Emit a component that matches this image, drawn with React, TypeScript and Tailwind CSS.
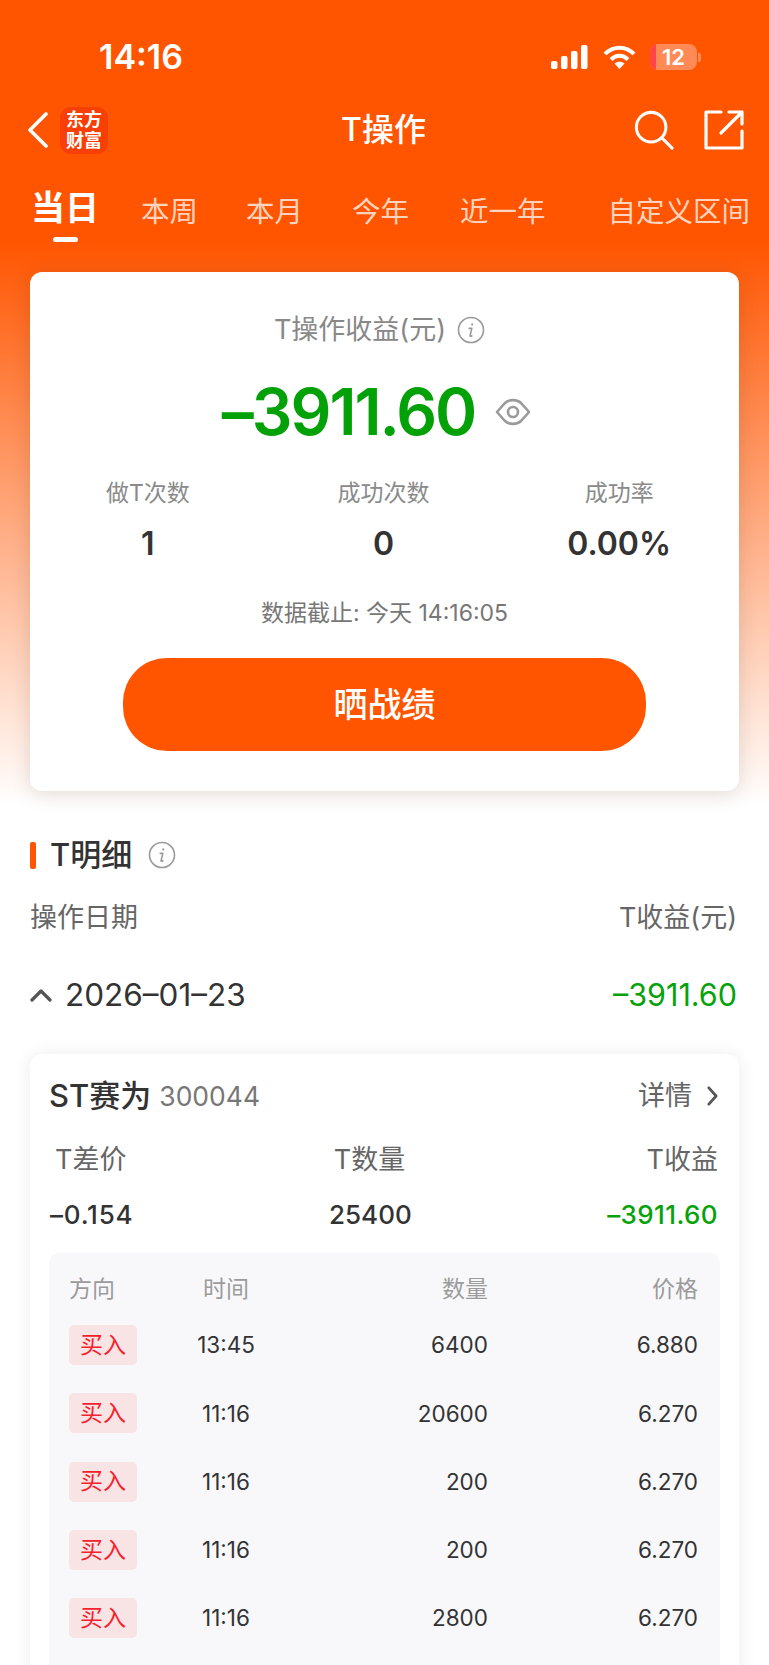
import React from "react";

type Trade = { time: string; qty: string; price: string };

const trades: Trade[] = [
  { time: "13:45", qty: "6400", price: "6.880" },
  { time: "11:16", qty: "20600", price: "6.270" },
  { time: "11:16", qty: "200", price: "6.270" },
  { time: "11:16", qty: "200", price: "6.270" },
  { time: "11:16", qty: "2800", price: "6.270" },
];

function InfoIcon({ className }: { className?: string }) {
  return (
    <svg viewBox="0 0 28 28" className={className} fill="none" stroke="#9a9a9a">
      <circle cx="14" cy="14" r="12.5" strokeWidth="1.6" />
      <path d="M12.2 12.4h2.6l-1.7 7.2c-.2.8.5 1 1.8.2" strokeWidth="1.6" strokeLinecap="round" strokeLinejoin="round" />
      <circle cx="15.2" cy="8.4" r="1.1" fill="#9a9a9a" stroke="none" />
    </svg>
  );
}

function EyeIcon() {
  return (
    <svg viewBox="0 0 36 28" className="h-[28px] w-[36px]" fill="none" stroke="#9a9a9a" strokeWidth="2.6">
      <path d="M2 14 L9.5 5.5 C14 1 22 1 26.5 5.5 L34 14 L26.5 22.5 C22 27 14 27 9.5 22.5 Z" strokeLinejoin="round" />
      <circle cx="18" cy="14" r="5" />
    </svg>
  );
}

function StatusBar() {
  return (
    <div className="flex h-[34px] items-center">
      <span className="ml-[99px] text-[34px] font-semibold leading-[34px] text-white">14:16</span>
      <div className="ml-auto mr-[68px] flex items-center">
        <svg viewBox="0 0 37 24" className="h-[24px] w-[37px]" fill="white">
          <rect x="0" y="16" width="6.5" height="8" rx="2" />
          <rect x="10" y="11" width="6.5" height="13" rx="2" />
          <rect x="20" y="6" width="6.5" height="18" rx="2" />
          <rect x="30" y="0" width="6.5" height="24" rx="2" />
        </svg>
        <svg viewBox="0 0 33 24" className="ml-[15px] h-[24px] w-[33px]" fill="none" stroke="white" strokeWidth="4">
          <path d="M2 9 C10 0.5 23 0.5 31 9" />
          <path d="M8 14.5 C13 9.5 20 9.5 25 14.5" />
          <path d="M16.5 24 L11.5 18.5 C14.5 16.2 18.5 16.2 21.5 18.5 Z" fill="white" stroke="none" />
        </svg>
        <div className="ml-[14px] flex items-center">
          <div className="relative flex h-[26px] w-[47px] items-center justify-center overflow-hidden rounded-[8px] bg-[#ff8a55]">
            <div className="absolute bottom-0 left-0 top-0 w-[6px] bg-[#ff4646]" />
            <span className="text-[22px] font-semibold leading-none text-white">12</span>
          </div>
          <div className="ml-[1px] h-[9px] w-[3px] rounded-r-[2px] bg-[#ff8a55]" />
        </div>
      </div>
    </div>
  );
}

function NavBar() {
  return (
    <div className="mt-[30px] flex h-[52px] items-center">
      <svg viewBox="0 0 22 36" className="ml-[27px] h-[36px] w-[22px]" fill="none" stroke="white" strokeWidth="3.6" strokeLinecap="round" strokeLinejoin="round">
        <path d="M19 2 L3 18 L19 34" />
      </svg>
      <div className="ml-[11px] flex h-[47px] w-[48px] flex-col items-center justify-center rounded-[11px] bg-[#f83f06] text-[18px] font-bold leading-[21px] text-white">
        <span>东方</span>
        <span>财富</span>
      </div>
      <span className="flex-1 pl-[25px] text-center text-[32px] font-medium leading-[52px] text-white">T操作</span>
      <svg viewBox="0 0 42 42" className="h-[40px] w-[40px]" fill="none" stroke="white" strokeWidth="3.2" strokeLinecap="round">
        <circle cx="18" cy="18" r="15.5" />
        <path d="M29.5 29.5 L40 40" />
      </svg>
      <svg viewBox="0 0 42 42" className="ml-[29px] mr-[24px] h-[42px] w-[42px]" fill="none" stroke="white" strokeWidth="3.2" strokeLinecap="round" strokeLinejoin="round">
        <path d="M18 3 H3 V39 H39 V22" />
        <path d="M18 24 L39 3 M26 3 H39 V15" />
      </svg>
    </div>
  );
}

function Tabs() {
  const inactive = "mt-[6px] text-[28.5px] leading-[40px] text-[#ffd4bf]";
  return (
    <div className="mt-[30px] flex h-[55px] items-start pl-[31px]">
      <div className="flex flex-col items-center">
        <span className="text-[34px] font-bold leading-[44px] text-white">当日</span>
        <span className="mt-[7px] h-[5px] w-[25px] rounded-full bg-white" />
      </div>
      <span className={`ml-[42px] ${inactive}`}>本周</span>
      <span className={`ml-[48px] ${inactive}`}>本月</span>
      <span className={`ml-[49px] ${inactive}`}>今年</span>
      <span className={`ml-[51px] ${inactive}`}>近一年</span>
      <span className={`ml-[62px] ${inactive}`}>自定义区间</span>
    </div>
  );
}

function SummaryCard() {
  return (
    <div className="mx-[30px] mt-[31px] h-[519px] rounded-[12px] bg-white pt-[40px] shadow-[0_3px_20px_rgba(60,40,30,0.15)]">
      <div className="flex h-[36px] items-center justify-center pr-[10px] text-[27px] text-[#888888]">
        <span>T操作收益(元)</span>
        <InfoIcon className="ml-[11px] h-[28px] w-[28px]" />
      </div>
      <div className="mt-[24px] flex h-[80px] items-center justify-center pr-[16px]">
        <span className="text-[64px] font-semibold leading-[80px] tracking-[-2px] text-[#03a108]">–3911.60</span>
        <span className="ml-[20px] flex"><EyeIcon /></span>
      </div>
      <div className="mt-[26px] grid grid-cols-3 pr-[2px] text-center">
        {[
          ["做T次数", "1"],
          ["成功次数", "0"],
          ["成功率", "0.00%"],
        ].map(([label, value]) => (
          <div key={label} className="flex flex-col items-center">
            <span className="text-[23px] leading-[30px] text-[#8a8a8a]">{label}</span>
            <span className="mt-[16px] text-[32px] font-semibold leading-[40px] text-[#333333]">{value}</span>
          </div>
        ))}
      </div>
      <div className="mt-[34px] text-center text-[23px] leading-[30px] text-[#777777]">数据截止: 今天 14:16:05</div>
      <div className="mx-[93px] mt-[30px] flex h-[93px] items-center justify-center rounded-[44px] bg-[#ff5500] text-[34px] font-medium text-white">
        晒战绩
      </div>
    </div>
  );
}

function TradeTable() {
  return (
    <div className="mt-[22px] h-[500px] rounded-[10px] bg-[#f8f8fb] px-[20px] pt-[21px]">
      <div className="grid h-[30px] grid-cols-[114px_86px_219px_210px] items-center text-[23px] leading-[30px] text-[#9b9b9b]">
        <span>方向</span>
        <span className="text-center">时间</span>
        <span className="text-right">数量</span>
        <span className="text-right">价格</span>
      </div>
      <div className="mt-[7px]">
        {trades.map((t, i) => (
          <div key={i} className="grid h-[68.25px] grid-cols-[114px_86px_219px_210px] items-center text-[22.5px] text-[#333333]">
            <span className="flex h-[40px] w-[68px] items-center justify-center rounded-[5px] bg-[#f8e3e5] text-[23px] text-[#f5222d]">买入</span>
            <span className="text-center">{t.time}</span>
            <span className="text-right">{t.qty}</span>
            <span className="text-right">{t.price}</span>
          </div>
        ))}
      </div>
    </div>
  );
}

function StockCard() {
  return (
    <div className="mx-[30px] mt-[37px] rounded-t-[12px] bg-white px-[19px] pt-[22px] shadow-[0_0_18px_rgba(0,0,0,0.08)]">
      <div className="flex h-[40px] items-center">
        <span className="text-[31px] font-medium leading-[40px] text-[#333333]">ST赛为</span>
        <span className="ml-[8px] text-[26.5px] leading-[40px] text-[#777777]">300044</span>
        <span className="ml-auto text-[27px] leading-[40px] text-[#666666]">详情</span>
        <svg viewBox="0 0 14 22" className="ml-[14px] mr-[1px] h-[20px] w-[13px]" fill="none" stroke="#555555" strokeWidth="3" strokeLinecap="round" strokeLinejoin="round">
          <path d="M3 2 L11 11 L3 20" />
        </svg>
      </div>
      <div className="mt-[24px] grid h-[36px] grid-cols-[280px_81px_1fr] items-center pr-[2px] text-[27px] text-[#666666]">
        <span className="pl-[6px]">T差价</span>
        <span className="whitespace-nowrap text-center">T数量</span>
        <span className="text-right">T收益</span>
      </div>
      <div className="mt-[19px] grid h-[36px] grid-cols-[280px_81px_1fr] items-center pr-[2px] text-[26px] font-medium text-[#333333]">
        <span className="pl-[1px] tracking-[0.8px]">–0.154</span>
        <span className="text-center">25400</span>
        <span className="text-right tracking-[0.4px] text-[#06a20b]">–3911.60</span>
      </div>
      <TradeTable />
    </div>
  );
}

export default function App() {
  return (
    <div className="h-[1665px] w-[769px] overflow-hidden bg-white [font-family:Inter,'Noto_Sans_CJK_SC',sans-serif]">
      <section className="h-[805px] bg-[linear-gradient(to_bottom,#ff5500_0,#ff5500_240px,#ffffff_805px)] pt-[40px]">
        <StatusBar />
        <NavBar />
        <Tabs />
        <SummaryCard />
      </section>

      <div className="mx-[30px] mt-[30px] flex h-[40px] items-center">
        <span className="h-[27px] w-[6px] rounded-[2px] bg-[#ff5500]" />
        <span className="ml-[14px] text-[31px] font-medium leading-[40px] text-[#333333]">T明细</span>
        <InfoIcon className="ml-[16px] h-[28px] w-[28px]" />
      </div>

      <div className="mx-[30px] mt-[25px] flex h-[36px] items-center justify-between text-[27px] text-[#666666]">
        <span>操作日期</span>
        <span className="pr-[2px]">T收益(元)</span>
      </div>

      <div className="mx-[30px] mt-[37px] flex h-[44px] items-center">
        <svg viewBox="0 0 22 14" className="h-[14px] w-[22px]" fill="none" stroke="#555555" strokeWidth="3.2" strokeLinecap="round" strokeLinejoin="round">
          <path d="M2 12 L11 3 L20 12" />
        </svg>
        <span className="ml-[13px] text-[31.5px] leading-[44px] text-[#333333]">2026–01–23</span>
        <span className="ml-auto pr-[2px] text-[30.5px] leading-[44px] text-[#06a20b]">–3911.60</span>
      </div>

      <StockCard />
    </div>
  );
}
